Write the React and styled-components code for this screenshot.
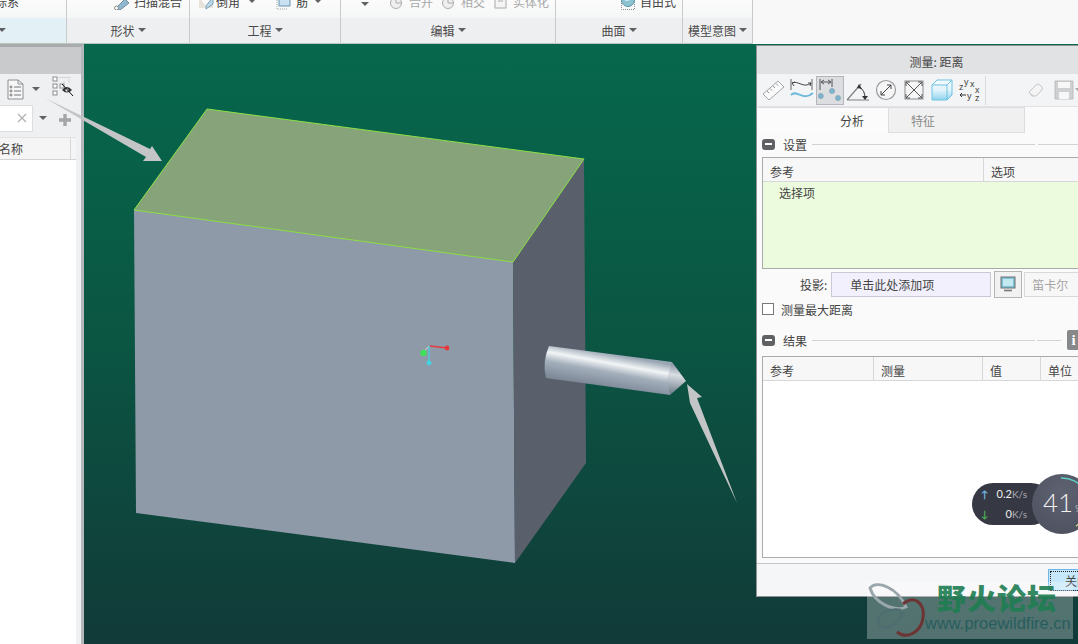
import React from "react";
import styled, { createGlobalStyle } from "styled-components";

const GlobalStyle = createGlobalStyle`
  html, body {
    margin: 0;
    padding: 0;
    background: #0c4a3f;
  }
  body {
    font-family: "Noto Sans CJK SC", "Liberation Sans", sans-serif;
    font-size: 12px;
    color: #444;
  }
`;

const Page = styled.div`
  position: relative;
  display: flex;
  flex-direction: column;
  width: 1078px;
  height: 644px;
  overflow: hidden;
`;

/* ---------- ribbon ---------- */

const Ribbon = styled.div`
  display: flex;
  flex: none;
  height: 44px;
  background: #f8f8f8;
`;

const Group = styled.div`
  display: flex;
  flex-direction: column;
  flex: none;
  box-sizing: border-box;
  width: ${(p) => p.$width}px;
  border-right: 1px solid #c9cacb;
`;

const Tools = styled.div`
  display: flex;
  align-items: flex-end;
  flex: none;
  box-sizing: border-box;
  height: 18px;
  padding-bottom: 8px;
  overflow: hidden;
  background: linear-gradient(#fbfbfb, #f5f6f6);
`;

const Tool = styled.div`
  display: flex;
  align-items: flex-end;
  flex: none;
  gap: ${(p) => p.$gap ?? 2}px;
  height: 16px;
  margin-left: ${(p) => p.$left ?? 0}px;
  line-height: 16px;
  color: ${(p) => (p.$off ? "#a9a9a9" : "#444")};
  svg {
    flex: none;
  }
`;

const GroupLabel = styled.div`
  display: flex;
  align-items: center;
  justify-content: center;
  flex: 1;
  gap: 3px;
  padding-bottom: 1px;
  background: ${(p) => (p.$active ? "#e3f0f6" : "#eeeff1")};
  border-bottom: 1px solid #b9c6c0;
  color: #4a4a4a;
  white-space: nowrap;
`;

const Caret = styled.span`
  flex: none;
  width: 0;
  height: 0;
  margin-left: ${(p) => p.$left ?? 0}px;
  margin-bottom: ${(p) => p.$bottom ?? 0}px;
  border-left: ${(p) => p.$size ?? 4}px solid transparent;
  border-right: ${(p) => p.$size ?? 4}px solid transparent;
  border-top: ${(p) => p.$size ?? 4}px solid #5f6164;
`;

/* ---------- body ---------- */

const Body = styled.div`
  display: flex;
  flex: 1;
  min-height: 0;
`;

const SidePanel = styled.aside`
  display: flex;
  flex-direction: column;
  flex: none;
  box-sizing: border-box;
  width: 84px;
  padding-right: 5px;
  background: #eff0f2;
  border-top: 3px solid #a9abad;
  border-right: 3px solid #b4b7bb;
`;

const SideHead = styled.div`
  flex: none;
  height: 27px;
  margin-right: -5px;
  background: #c9cacc;
`;

const SideTools = styled.div`
  display: flex;
  align-items: center;
  flex: none;
  height: 30px;
  padding-left: 7px;
`;

const SearchRow = styled.div`
  display: flex;
  align-items: center;
  flex: none;
  height: 28px;
  margin-bottom: 5px;
`;

const SearchInput = styled.div`
  display: flex;
  align-items: center;
  justify-content: flex-end;
  box-sizing: border-box;
  width: 33px;
  height: 27px;
  padding-right: 4px;
  background: #fff;
  border: 1px solid #dcdde0;
  border-left: 0;
`;

const TreeHead = styled.div`
  display: flex;
  align-items: center;
  flex: none;
  box-sizing: border-box;
  height: 23px;
  background: #f5f5f6;
  border-top: 1px solid #e2e2e4;
  border-bottom: 1px solid #d4d4d6;
  color: #444;
`;

const TreeName = styled.div`
  box-sizing: border-box;
  width: 72px;
  margin-left: -1px;
  border-right: 1px solid #d8d8da;
  line-height: 21px;
`;

const TreeList = styled.div`
  flex: 1;
  background: #fff;
`;

const Viewport = styled.main`
  position: relative;
  flex: 1;
  background: linear-gradient(#06684c, #0b5543 50%, #113a38);
`;

const Scene = styled.svg`
  display: block;
  width: 100%;
  height: 100%;
`;

/* ---------- dialog ---------- */

const Dialog = styled.section`
  position: absolute;
  top: 1px;
  left: 672px;
  display: flex;
  flex-direction: column;
  box-sizing: border-box;
  width: 360px;
  height: 552px;
  background: #fafafa;
  border: 1px solid #8f9192;
  border-right: 0;
`;

const TitleBar = styled.div`
  flex: none;
  height: 28px;
  line-height: 31px;
  text-align: center;
  background: #e1e2e4;
  color: #444;
`;

const IconBar = styled.div`
  display: flex;
  align-items: center;
  flex: none;
  box-sizing: border-box;
  height: 33px;
  padding-left: 3px;
  background: #f3f4f5;
  border-bottom: 1px solid #e2e2e4;
`;

const IconButton = styled.div`
  display: flex;
  align-items: center;
  justify-content: center;
  flex: none;
  box-sizing: border-box;
  width: ${(p) => p.$width ?? 28}px;
  height: 29px;
  background: ${(p) => (p.$active ? "#dcdde0" : "transparent")};
  border: 1px solid ${(p) => (p.$active ? "#b4b6b9" : "transparent")};
`;

const BarDivider = styled.div`
  flex: none;
  width: 1px;
  height: 29px;
  margin: 0 36px 0 1px;
  background: #d8d9db;
`;

const Tabs = styled.div`
  display: flex;
  flex: none;
  height: 26px;
  padding-left: 1px;
`;

const Tab = styled.div`
  box-sizing: border-box;
  width: ${(p) => p.$width}px;
  padding-left: ${(p) => p.$pad}px;
  line-height: 26px;
  background: ${(p) => (p.$active ? "#fbfbfb" : "#f0f0f1")};
  border: 1px solid #dcdde0;
  border-width: ${(p) => (p.$active ? "1px 1px 0 0" : "1px 1px 1px 0")};
  color: ${(p) => (p.$active ? "#444" : "#8a8a8a")};
`;

const SectionHead = styled.div`
  display: flex;
  align-items: center;
  flex: none;
  height: 20px;
  margin-top: ${(p) => p.$top}px;
  padding-left: 5px;
`;

const Collapse = styled.span`
  display: flex;
  align-items: center;
  justify-content: center;
  flex: none;
  width: 13px;
  height: 11px;
  margin-right: 8px;
  background: #606165;
  border-radius: 3px;
  &::after {
    content: "";
    width: 7px;
    height: 2px;
    background: #fff;
  }
`;

const Rule = styled.span`
  flex: ${(p) => (p.$width ? "none" : 1)};
  width: ${(p) => p.$width ?? 0}px;
  height: 1px;
  margin-left: ${(p) => p.$left}px;
  background: #d2d3d4;
`;

const InfoBadge = styled.span`
  flex: none;
  width: 13px;
  height: 20px;
  margin: 0 36px 0 6px;
  background: #87888a;
  border-radius: 2px;
  color: #fff;
  font: bold 15px/20px "Liberation Serif", serif;
  text-align: center;
`;

const Table = styled.div`
  display: flex;
  flex-direction: column;
  flex: ${(p) => (p.$grow ? 1 : "none")};
  height: ${(p) => (p.$grow ? "auto" : "110px")};
  margin: ${(p) => p.$top}px 0 0 5px;
  background: #fff;
  border: 1px solid #a9aaab;
  border-right: 0;
`;

const TableHead = styled.div`
  display: flex;
  flex: none;
  height: 23px;
  background: #f7f7f7;
  border-bottom: 1px solid #d6d7d8;
`;

const HeadCell = styled.div`
  flex: none;
  box-sizing: border-box;
  width: ${(p) => p.$width}px;
  padding-left: 7px;
  line-height: 27px;
  border-right: 1px solid #d6d7d8;
`;

const PickArea = styled.div`
  flex: 1;
  padding-left: 16px;
  background: #ecfbdd;
  line-height: 22px;
`;

const ProjectRow = styled.div`
  display: flex;
  align-items: center;
  flex: none;
  height: 26px;
  margin-top: 2px;
  padding-left: 43px;
`;

const ProjectField = styled.div`
  box-sizing: border-box;
  width: 160px;
  height: 25px;
  margin-left: 4px;
  padding-left: 18px;
  background: #f2f0fc;
  border: 1px solid #c8c9d4;
  line-height: 23px;
`;

const ScreenButton = styled.div`
  display: flex;
  align-items: center;
  justify-content: center;
  box-sizing: border-box;
  width: 28px;
  height: 27px;
  margin-left: 3px;
  background: #f2f2f3;
  border: 1px solid #b4b5b7;
`;

const GhostButton = styled.div`
  box-sizing: border-box;
  width: 70px;
  height: 25px;
  margin-left: 2px;
  padding-left: 7px;
  background: #f7f7f7;
  border: 1px solid #d9d9da;
  color: #a4a4a4;
  line-height: 23px;
`;

const CheckRow = styled.label`
  display: flex;
  align-items: center;
  flex: none;
  height: 20px;
  margin-top: 2px;
  padding-left: 5px;
  gap: 7px;
`;

const CheckBox = styled.span`
  flex: none;
  box-sizing: border-box;
  width: 12px;
  height: 12px;
  background: #fff;
  border: 1px solid #77787a;
`;

const Footer = styled.div`
  display: flex;
  flex: none;
  box-sizing: border-box;
  height: 33px;
  margin-top: 5px;
  padding: 5px 0 0 291px;
  background: #f5f6f8;
  border-top: 1px solid #c6c7c8;
`;

const CloseButton = styled.div`
  flex: none;
  box-sizing: border-box;
  width: 62px;
  height: 22px;
  padding: 1px;
  background: #c7e7fb;
  border: 1px solid #6db6e8;
  span {
    display: block;
    height: 18px;
    padding-left: 14px;
    border: 1px dotted #222;
    line-height: 18px;
  }
`;

/* ---------- overlays ---------- */

const Annotations = styled.svg`
  position: absolute;
  inset: 0;
  width: 1078px;
  height: 644px;
  pointer-events: none;
`;

const SpeedWidget = styled.div`
  position: absolute;
  top: 474px;
  left: 972px;
  width: 130px;
  height: 60px;
  font-family: Lato, "Open Sans", sans-serif;
`;

const SpeedPill = styled.div`
  position: absolute;
  top: 9px;
  left: 0;
  display: flex;
  flex-direction: column;
  justify-content: space-around;
  box-sizing: border-box;
  width: 80px;
  height: 42px;
  padding: 1px 0 1px 9px;
  background: #363944;
  border-radius: 21px;
`;

const SpeedLine = styled.div`
  display: flex;
  align-items: baseline;
  width: 46px;
  color: #eee;
  font-size: 11px;
  line-height: 14px;
  small {
    color: #a9acb4;
    font-size: 10px;
  }
  b {
    margin-right: auto;
    font-weight: 700;
    font-size: 10px;
    color: ${(p) => p.$color};
  }
`;

const SpeedDial = styled.div`
  position: absolute;
  top: 0;
  left: 60px;
  display: flex;
  align-items: baseline;
  box-sizing: border-box;
  width: 60px;
  height: 60px;
  padding: 10px 0 0 11px;
  background: radial-gradient(circle at 50% 30%, #5e6170, #4c4f5c);
  border-radius: 50%;
  color: #f2f2f2;
  font-size: 26px;
  font-weight: 300;
  line-height: 36px;
  small {
    margin-left: 2px;
    font-size: 10px;
  }
`;

const DialArc = styled.svg`
  position: absolute;
  inset: 0;
`;

const Watermark = styled.div`
  position: absolute;
  top: 582px;
  left: 867px;
  display: flex;
  flex-direction: column;
  box-sizing: border-box;
  width: 206px;
  height: 57px;
  padding-left: 58px;
  background: rgba(255, 255, 255, 0.28);
`;

const WatermarkLogo = styled.svg`
  position: absolute;
  top: 0;
  left: 0;
`;

const WatermarkTitle = styled.div`
  margin: 0 0 0 12px;
  color: #1e7d52;
  font: 900 29px/30px "Noto Sans CJK SC", sans-serif;
  letter-spacing: 1px;
  white-space: nowrap;
  opacity: 0.9;
`;

const WatermarkUrl = styled.div`
  margin-left: 0;
  color: rgba(36, 92, 92, 0.95);
  font: 16.5px/22px "Liberation Sans", sans-serif;
  white-space: nowrap;
`;

/* ---------- icons ---------- */

const SweepIcon = () => (
  <svg width="16" height="16" viewBox="0 0 16 16">
    <path d="M1 15 L11 5 L15 9 L6 16Z" fill="#8fb8d2" stroke="#7a8a96" />
    <circle cx="2.5" cy="14" r="2" fill="#fff" stroke="#888" />
  </svg>
);

const ChamferIcon = () => (
  <svg width="16" height="16" viewBox="0 0 16 16">
    <path d="M1 3 L8 12 L15 3 V14 H1Z" fill="#e7e2da" />
    <path d="M8 12 L15 3 V10 L8 15Z" fill="#bcd9ea" stroke="#7d9fb5" />
  </svg>
);

const RibIcon = () => (
  <svg width="16" height="16" viewBox="0 0 16 16">
    <path d="M3 4 H14 V12 H3Z" fill="#c9e2f1" stroke="#6d93ab" />
    <path d="M1 6 V15 H12" fill="none" stroke="#9aa" strokeDasharray="1 1" />
  </svg>
);

const RoundGhostIcon = () => (
  <svg width="16" height="16" viewBox="0 0 16 16">
    <circle cx="7" cy="9" r="5.5" fill="#efefef" stroke="#adadad" />
    <path d="M7 4 V9 H12" fill="none" stroke="#adadad" />
  </svg>
);

const SheetGhostIcon = () => (
  <svg width="16" height="16" viewBox="0 0 16 16">
    <rect x="2" y="3" width="11" height="11" fill="#f5f5f5" stroke="#a8a8a8" />
    <rect x="5" y="1" width="5" height="7" fill="#d0d0d0" />
  </svg>
);

const FreeStyleIcon = () => (
  <svg width="16" height="16" viewBox="0 0 16 16">
    <rect x="1.5" y="3" width="13" height="12.5" fill="none" stroke="#8a8a8a" strokeDasharray="1 1" />
    <circle cx="8" cy="6" r="6.5" fill="#8cc3d0" stroke="#5c93a6" />
    <circle cx="7" cy="4" r="3" fill="#d7eef2" />
  </svg>
);

const DocListIcon = () => (
  <svg width="17" height="21" viewBox="0 0 17 21">
    <path d="M1 1 H11 L16 5 V20 H1Z" fill="#f7f7f8" stroke="#8d8f92" />
    <path d="M11 1 V5 H16" fill="none" stroke="#8d8f92" />
    <g fill="none" stroke="#75777a">
      <circle cx="4" cy="8" r="1" />
      <circle cx="4" cy="12" r="1" />
      <circle cx="4" cy="16" r="1" />
      <path d="M7 8 H14 M7 12 H14 M7 16 H14" />
    </g>
  </svg>
);

const HiddenTreeIcon = () => (
  <svg width="22" height="21" viewBox="0 0 22 21">
    <g fill="#fff" stroke="#8a8c8f">
      <rect x="1" y="1" width="4" height="4" />
      <rect x="1" y="8" width="4" height="4" />
      <rect x="1" y="15" width="4" height="4" />
      <rect x="8" y="8" width="4" height="4" />
    </g>
    <path d="M7 1.5 H19 M12 5 V7 M17 3 V7" stroke="#d3d4d6" fill="none" />
    <path d="M10 14 Q15 8 20 14 Q15 19 10 14Z" fill="#333" />
    <circle cx="15" cy="14" r="1.6" fill="#eff0f2" />
    <path d="M10 8 L21 20" stroke="#111" />
  </svg>
);

const ClearIcon = () => (
  <svg width="12" height="12" viewBox="0 0 12 12">
    <path d="M2 2 L10 10 M10 2 L2 10" stroke="#b0b1b3" strokeWidth="1.3" />
  </svg>
);

const PlusIcon = () => (
  <svg width="12" height="12" viewBox="0 0 12 12">
    <path d="M6 0 V12 M0 6 H12" stroke="#a3a5a8" strokeWidth="3.4" />
  </svg>
);

const RulerIcon = () => (
  <svg width="24" height="24" viewBox="0 0 24 24">
    <path d="M1 16 L16 3 L22 9 L7 22Z" fill="#fafafa" stroke="#a3a4a6" />
    <path d="M5 13 L7 15 M8 10.5 L10 12.5 M11 8 L13 10 M14 5.5 L16 7.5" stroke="#8f9092" />
  </svg>
);

const WaveIcon = () => (
  <svg width="24" height="24" viewBox="0 0 24 24">
    <path d="M1 1 V12 M22 1 V12" stroke="#666" fill="none" />
    <path d="M2 5 C8 2 14 11 21 5 M2 5 L5 4 M2 5 L4 8 M21 5 L18 5 M21 5 L20 8" stroke="#444" fill="none" />
    <path d="M1 17 C7 11 13 24 23 15" stroke="#6fb9dc" strokeWidth="2" fill="none" />
  </svg>
);

const DistanceIcon = () => (
  <svg width="24" height="24" viewBox="0 0 24 24">
    <path d="M2 1 V12 M14 1 V9 M3 4 H13 M3 4 L6 2 M3 4 L6 6 M13 4 L10 2 M13 4 L10 6" stroke="#555" fill="none" />
    <g fill="#79b6d4" stroke="#8aa2b0" strokeWidth="0.8">
      <circle cx="2.8" cy="18" r="2.5" />
      <circle cx="14" cy="13" r="2.5" />
      <circle cx="20" cy="20" r="2.5" />
    </g>
  </svg>
);

const AngleIcon = () => (
  <svg width="24" height="24" viewBox="0 0 24 24">
    <path d="M1 22 L15 6 M1 22 H23" stroke="#808182" fill="none" strokeWidth="1.2" />
    <path d="M13 9 Q19 12 19 20" stroke="#333" fill="none" />
    <path d="M13 6 L16 11 L11 10Z M16 18 H22 L19 22Z" fill="#333" />
  </svg>
);

const DiameterIcon = () => (
  <svg width="24" height="24" viewBox="0 0 24 24">
    <circle cx="12" cy="12" r="9.5" fill="#f6f6f6" stroke="#9a9b9d" strokeWidth="1.2" />
    <path d="M7 17 L17 7 M7 17 V13 M7 17 H11 M17 7 V11 M17 7 H13" stroke="#444" fill="none" />
  </svg>
);

const ExtentIcon = () => (
  <svg width="24" height="24" viewBox="0 0 24 24">
    <rect x="3" y="3" width="18" height="18" fill="#f6f6f6" stroke="#8a8b8d" />
    <path d="M4 4 L20 20 M20 4 L4 20 M4 4 H8 M4 4 V8 M20 4 H16 M20 4 V8 M4 20 H8 M4 20 V16 M20 20 H16 M20 20 V16" stroke="#555" fill="none" />
  </svg>
);

const VolumeIcon = () => (
  <svg width="24" height="24" viewBox="0 0 24 24">
    <defs>
      <linearGradient id="volumeFill" x1="0" y1="0" x2="0" y2="1">
        <stop offset="0" stopColor="#f5fbfe" />
        <stop offset="0.5" stopColor="#e2f4fb" />
        <stop offset="1" stopColor="#8ed3ee" />
      </linearGradient>
    </defs>
    <path d="M2 7 L7 2 H22 V17 L17 22 H2Z" fill="url(#volumeFill)" stroke="#6fc3e2" />
    <path d="M2 7 H17 V22 M17 7 L22 2" fill="none" stroke="#6fc3e2" />
  </svg>
);

const CoordsIcon = () => (
  <svg width="24" height="24" viewBox="0 0 24 24" fontFamily="Liberation Sans, sans-serif" fontSize="9" fill="#444">
    <text x="1" y="12">z</text>
    <text x="6" y="7">y</text>
    <text x="12" y="9">x</text>
    <text x="9" y="21">y</text>
    <text x="17" y="15">x</text>
    <text x="17" y="23">z</text>
    <path d="M2 17 H8 M2 17 L4 15 M2 17 L4 19" stroke="#333" fill="none" />
  </svg>
);

const EraserIcon = () => (
  <svg width="18" height="18" viewBox="0 0 18 18">
    <path d="M2 11 L9 4 Q11 2 13 4 L15 6 Q16 8 14 10 L9 15 H5Z" fill="#f4f4f4" stroke="#c4c4c4" />
    <path d="M2 11 L8 15 H5Z" fill="#d4d4d4" />
  </svg>
);

const SaveIcon = () => (
  <svg width="26" height="20" viewBox="0 0 26 20">
    <path d="M1 1 H19 V19 H1Z" fill="#cfd0d2" stroke="#bdbec0" />
    <rect x="4" y="2" width="12" height="6" fill="#f7f7f7" />
    <rect x="5" y="12" width="10" height="7" fill="#f7f7f7" />
    <path d="M21 8 H26 L23.5 11Z" fill="#a9aaac" />
  </svg>
);

const MonitorIcon = () => (
  <svg width="16" height="16" viewBox="0 0 16 16">
    <rect x="1" y="1" width="14" height="11" fill="#7cc4d3" stroke="#6a6d70" />
    <rect x="3" y="3" width="10" height="7" fill="#c2e8f0" />
    <path d="M4 14.5 H12" stroke="#777" strokeWidth="1.6" />
  </svg>
);

const LogoMark = () => (
  <WatermarkLogo width="60" height="57" viewBox="0 0 60 57">
    <path d="M3 6 C10 -2 30 5 39 25 C28 30 8 22 3 6Z" fill="none" stroke="#9aa7ad" strokeWidth="3" />
    <path d="M36 22 C48 12 58 22 56 36 C54 50 40 58 30 50" fill="none" stroke="#6d3434" strokeWidth="3" />
    <path d="M34 28 C22 26 8 32 12 42 C16 50 30 44 36 30" fill="none" stroke="#4d6d70" strokeWidth="2.5" />
  </WatermarkLogo>
);

const tableOneCols = [221, 140];
const tableTwoCols = [111, 109, 58, 80];

export default function App() {
  return (
    <Page>
      <GlobalStyle />
      <Ribbon>
        <Group $width={67}>
          <Tools>
            <Tool $left={-17}>坐标系</Tool>
          </Tools>
          <GroupLabel $active>
            <Caret $left={-62} />
          </GroupLabel>
        </Group>
        <Group $width={123}>
          <Tools>
            <Tool $left={47} $gap={4}>
              <SweepIcon />
              扫描混合
            </Tool>
          </Tools>
          <GroupLabel>
            形状
            <Caret />
          </GroupLabel>
        </Group>
        <Group $width={151}>
          <Tools>
            <Tool $left={8}>
              <ChamferIcon />
              倒角
            </Tool>
            <Caret $left={8} $bottom={7} />
            <Tool $left={20} $gap={4}>
              <RibIcon />
              筋
            </Tool>
            <Caret $left={6} $bottom={7} />
          </Tools>
          <GroupLabel>
            工程
            <Caret />
          </GroupLabel>
        </Group>
        <Group $width={215}>
          <Tools>
            <Caret $left={20} $bottom={4} />
            <Tool $left={20} $off $gap={4}>
              <RoundGhostIcon />
              合并
            </Tool>
            <Tool $left={8} $off $gap={4}>
              <RoundGhostIcon />
              相交
            </Tool>
            <Tool $left={8} $off $gap={4}>
              <SheetGhostIcon />
              实体化
            </Tool>
          </Tools>
          <GroupLabel>
            编辑
            <Caret />
          </GroupLabel>
        </Group>
        <Group $width={127}>
          <Tools>
            <Tool $left={64} $gap={4}>
              <FreeStyleIcon />
              自由式
            </Tool>
          </Tools>
          <GroupLabel>
            曲面
            <Caret />
          </GroupLabel>
        </Group>
        <Group $width={70}>
          <Tools />
          <GroupLabel>
            模型意图
            <Caret />
          </GroupLabel>
        </Group>
      </Ribbon>

      <Body>
        <SidePanel>
          <SideHead />
          <SideTools>
            <DocListIcon />
            <Caret $left={8} />
            <Tool $left={12}>
              <HiddenTreeIcon />
            </Tool>
          </SideTools>
          <SearchRow>
            <SearchInput>
              <ClearIcon />
            </SearchInput>
            <Caret $left={6} />
            <Tool $left={12}>
              <PlusIcon />
            </Tool>
          </SearchRow>
          <TreeHead>
            <TreeName>名称</TreeName>
          </TreeHead>
          <TreeList />
        </SidePanel>

        <Viewport>
          <Scene viewBox="84 44 994 600" preserveAspectRatio="none">
            <defs>
              <linearGradient id="shaft" gradientUnits="userSpaceOnUse" x1="612" y1="354" x2="606" y2="387">
                <stop offset="0" stopColor="#99a6b3" />
                <stop offset="0.28" stopColor="#f2f5f6" />
                <stop offset="0.55" stopColor="#a4afbc" />
                <stop offset="1" stopColor="#7e8a98" />
              </linearGradient>
              <linearGradient id="cone" gradientUnits="userSpaceOnUse" x1="676" y1="365" x2="672" y2="393">
                <stop offset="0" stopColor="#8e9aa8" />
                <stop offset="0.35" stopColor="#d8dee3" />
                <stop offset="1" stopColor="#75818f" />
              </linearGradient>
            </defs>
            <polygon points="134,210 513,262 515,563 136,513" fill="#8f9aa9" />
            <polygon points="513,262 584,159 586,463 515,563" fill="#5a606b" />
            <polygon points="207,109 584,159 513,262 134,210" fill="#86a37a" stroke="#8fe048" strokeWidth="1" />
            <path d="M549 346 L672 362 L670 395 L546 378 Q542 362 549 346Z" fill="url(#shaft)" />
            <polygon points="672,362 686,381 670,395 667,379" fill="url(#cone)" />
            <path d="M429 346 L423 353" fill="none" stroke="#d8dde0" />
            <path d="M430 346 L447 348" stroke="#e5393a" strokeWidth="1.3" fill="none" />
            <path d="M429 346 V363" stroke="#43d4e2" strokeWidth="1.2" fill="none" />
            <circle cx="447" cy="348" r="2.4" fill="#e5393a" />
            <circle cx="423.5" cy="353" r="3.2" fill="#3fe05a" />
            <circle cx="429" cy="363" r="2.4" fill="#43d4e2" />
          </Scene>

          <Dialog>
            <TitleBar>测量: 距离</TitleBar>
            <IconBar>
              <IconButton><RulerIcon /></IconButton>
              <IconButton><WaveIcon /></IconButton>
              <IconButton $active><DistanceIcon /></IconButton>
              <IconButton><AngleIcon /></IconButton>
              <IconButton><DiameterIcon /></IconButton>
              <IconButton><ExtentIcon /></IconButton>
              <IconButton><VolumeIcon /></IconButton>
              <IconButton><CoordsIcon /></IconButton>
              <BarDivider />
              <IconButton><EraserIcon /></IconButton>
              <IconButton $width={34}><SaveIcon /></IconButton>
            </IconBar>
            <Tabs>
              <Tab $active $width={131} $pad={82}>分析</Tab>
              <Tab $width={136} $pad={22}>特征</Tab>
            </Tabs>
            <SectionHead $top={1}>
              <Collapse />
              设置
              <Rule $left={5} $width={223} />
              <Rule $left={3} />
            </SectionHead>
            <Table $top={3}>
              <TableHead>
                <HeadCell $width={tableOneCols[0]}>参考</HeadCell>
                <HeadCell $width={tableOneCols[1]}>选项</HeadCell>
              </TableHead>
              <PickArea>选择项</PickArea>
            </Table>
            <ProjectRow>
              投影:
              <ProjectField>单击此处添加项</ProjectField>
              <ScreenButton><MonitorIcon /></ScreenButton>
              <GhostButton>笛卡尔</GhostButton>
            </ProjectRow>
            <CheckRow>
              <CheckBox />
              测量最大距离
            </CheckRow>
            <SectionHead $top={11}>
              <Collapse />
              结果
              <Rule $left={5} $width={223} />
              <Rule $left={2} />
              <InfoBadge>i</InfoBadge>
            </SectionHead>
            <Table $top={6} $grow>
              <TableHead>
                {["参考", "测量", "值", "单位"].map((name, i) => (
                  <HeadCell key={name} $width={tableTwoCols[i]}>{name}</HeadCell>
                ))}
              </TableHead>
            </Table>
            <Footer>
              <CloseButton><span>关闭</span></CloseButton>
            </Footer>
          </Dialog>
        </Viewport>
      </Body>

      <Annotations viewBox="0 0 1078 644">
        <polygon points="45,98 150,149 152,146 162,161 143,161 146,157" fill="#c3c5c6" />
        <polygon points="687,384 702,397 697,398 737,503 690,403" fill="#c3c5c6" />
      </Annotations>

      <SpeedWidget>
        <SpeedPill>
          <SpeedLine $color="#6fb7e0"><b>↑</b>0.2<small>K/s</small></SpeedLine>
          <SpeedLine $color="#4caf50"><b>↓</b>0<small>K/s</small></SpeedLine>
        </SpeedPill>
        <SpeedDial>
          <DialArc width="60" height="60" viewBox="0 0 60 60">
            <path d="M29 4 A26 26 0 0 1 52 16" fill="none" stroke="#5fd0c4" strokeWidth="1.5" />
            <path d="M52 44 A26 26 0 0 1 44 52" fill="none" stroke="#b9dc7a" strokeWidth="1.5" />
          </DialArc>
          41<small>%</small>
        </SpeedDial>
      </SpeedWidget>

      <Watermark>
        <LogoMark />
        <WatermarkTitle>野火论坛</WatermarkTitle>
        <WatermarkUrl>www.proewildfire.cn</WatermarkUrl>
      </Watermark>
    </Page>
  );
}
